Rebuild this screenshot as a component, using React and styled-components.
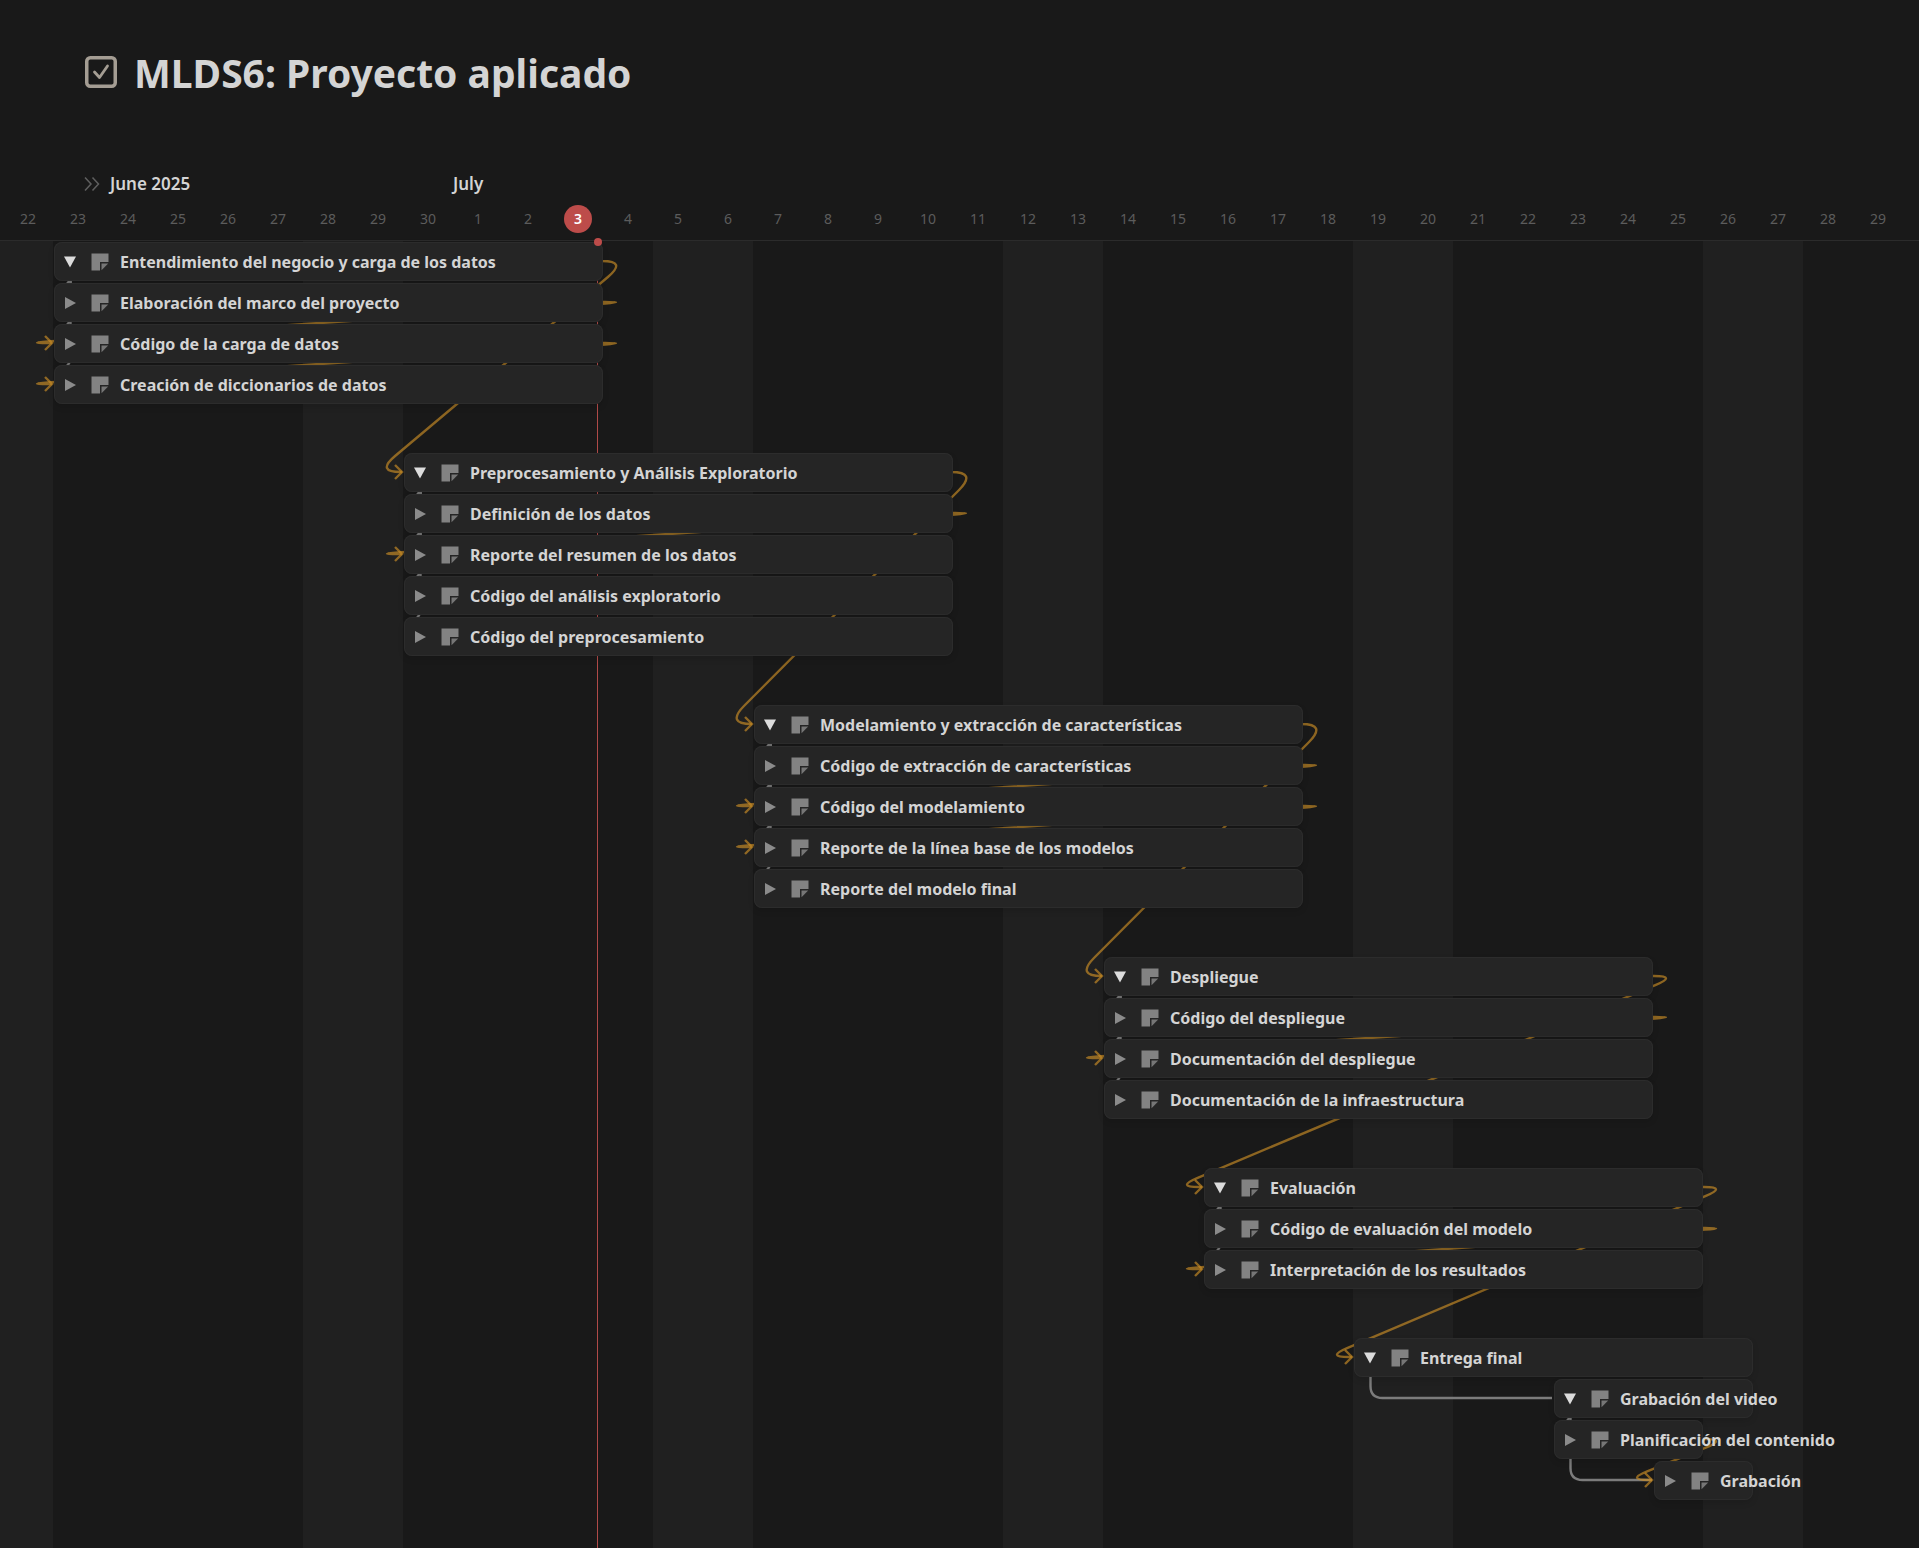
import React from "react";
import styled, { createGlobalStyle, css } from "styled-components";

const DAY = 50;
const EDGE = 3;
const ROW = 39;
const ROW_GAP = 2;
const GROUP_GAP = 49;
const CHART_PAD = 1;
const DAY_COUNT = 38;

const columns = `${EDGE}px repeat(${DAY_COUNT}, ${DAY}px) 1fr`;

const days = Array.from({ length: DAY_COUNT }, (_, i) => {
  const date = new Date(Date.UTC(2025, 5, 22 + i));
  return { key: i, label: date.getUTCDate(), today: i === 11 };
});

/* start and length count in days; 0 is June 22 */
const groups = [
  [
    { name: "Entendimiento del negocio y carga de los datos", start: 1, length: 11, open: true },
    { name: "Elaboración del marco del proyecto", start: 1, length: 11 },
    { name: "Código de la carga de datos", start: 1, length: 11 },
    { name: "Creación de diccionarios de datos", start: 1, length: 11 },
  ],
  [
    { name: "Preprocesamiento y Análisis Exploratorio", start: 8, length: 11, open: true },
    { name: "Definición de los datos", start: 8, length: 11 },
    { name: "Reporte del resumen de los datos", start: 8, length: 11 },
    { name: "Código del análisis exploratorio", start: 8, length: 11 },
    { name: "Código del preprocesamiento", start: 8, length: 11 },
  ],
  [
    { name: "Modelamiento y extracción de características", start: 15, length: 11, open: true },
    { name: "Código de extracción de características", start: 15, length: 11 },
    { name: "Código del modelamiento", start: 15, length: 11 },
    { name: "Reporte de la línea base de los modelos", start: 15, length: 11 },
    { name: "Reporte del modelo final", start: 15, length: 11 },
  ],
  [
    { name: "Despliegue", start: 22, length: 11, open: true },
    { name: "Código del despliegue", start: 22, length: 11 },
    { name: "Documentación del despliegue", start: 22, length: 11 },
    { name: "Documentación de la infraestructura", start: 22, length: 11 },
  ],
  [
    { name: "Evaluación", start: 24, length: 10, open: true },
    { name: "Código de evaluación del modelo", start: 24, length: 10 },
    { name: "Interpretación de los resultados", start: 24, length: 10 },
  ],
  [
    { name: "Entrega final", start: 27, length: 8, open: true },
    { name: "Grabación del video", start: 31, length: 4, open: true },
    { name: "Planificación del contenido", start: 31, length: 3 },
    { name: "Grabación", start: 33, length: 2 },
  ],
];

/* [group, row] pairs */
const dependencies = [
  [[0, 0], [1, 0]],
  [[0, 1], [0, 2]],
  [[0, 2], [0, 3]],
  [[1, 0], [2, 0]],
  [[1, 1], [1, 2]],
  [[2, 0], [3, 0]],
  [[2, 1], [2, 2]],
  [[2, 2], [2, 3]],
  [[3, 0], [4, 0]],
  [[3, 1], [3, 2]],
  [[4, 0], [5, 0]],
  [[4, 1], [4, 2]],
  [[5, 2], [5, 3]],
];

const branches = [
  ...[0, 1, 2, 3, 4].flatMap((g) => groups[g].slice(1).map((_, i) => [[g, 0], [g, i + 1]])),
  [[5, 0], [5, 1]],
  [[5, 1], [5, 2]],
  [[5, 1], [5, 3]],
];

const box = ([g, r]) => {
  const bar = groups[g][r];
  let top = CHART_PAD;
  for (let i = 0; i < g; i += 1) {
    top += groups[i].length * (ROW + ROW_GAP) - ROW_GAP + GROUP_GAP;
  }
  top += r * (ROW + ROW_GAP);
  const left = EDGE + bar.start * DAY + 1;
  return { left, right: left + bar.length * DAY - 1, top, bottom: top + ROW, mid: top + 19 };
};

const dependencyPath = (from, to) => {
  const a = { x: from.right + 24, y: from.mid };
  const b = { x: to.left - 28, y: to.mid };
  const dist = Math.hypot(b.x - a.x, b.y - a.y);
  const ux = (b.x - a.x) / dist;
  const uy = (b.y - a.y) / dist;
  const d = 44 / (1 + Math.abs(ux));
  return [
    `M${from.right} ${from.mid} H${a.x - d}`,
    `Q${a.x} ${a.y} ${a.x + ux * d} ${a.y + uy * d}`,
    `L${b.x - ux * d} ${b.y - uy * d}`,
    `Q${b.x} ${b.y} ${b.x + d} ${b.y}`,
    `H${to.left - 2}`,
  ].join(" ");
};

const branchPath = (from, to) => {
  const x = from.left + 16.5;
  if (to.left > x) {
    return `M${x} ${from.bottom} V${to.mid - 12} Q${x} ${to.mid} ${x + 12} ${to.mid} H${to.left - 2}`;
  }
  return `M${x} ${from.bottom} V${to.top - 6} C${x} ${to.top - 2} ${x - 3} ${to.top} ${x - 6} ${to.top + 4}`;
};

const GlobalStyle = createGlobalStyle`
  *, *::before, *::after { box-sizing: border-box; }
  body {
    margin: 0;
    background: #191919;
    color: #d4d4d4;
    font-family: "Noto Sans", "Open Sans", sans-serif;
  }
`;

const Page = styled.main`
  display: flex;
  flex-direction: column;
  min-height: 100vh;
  overflow: hidden;
`;

const TitleBar = styled.header`
  display: flex;
  align-items: center;
  gap: 16px;
  padding: 43px 84px 0;
`;

const Title = styled.h1`
  margin: 0;
  font-size: 39px;
  line-height: 60px;
  font-weight: 700;
  white-space: nowrap;
`;

const TitleIcon = styled.svg`
  flex: none;
  width: 34px;
  height: 34px;
  margin-bottom: 2px;
`;

const Timeline = styled.section`
  display: flex;
  flex-direction: column;
  flex: 1;
  margin-top: 65px;
`;

const MonthRow = styled.div`
  display: grid;
  grid-template-columns: ${columns};
  align-items: center;
  height: 32px;
`;

const CurrentMonth = styled.div`
  grid-column: 3 / span 7;
  display: flex;
  align-items: center;
  gap: 10px;
  padding-left: 31px;
`;

const MonthLabel = styled.span`
  font-size: 17px;
  line-height: 24px;
  font-weight: 600;
`;

const NextMonth = styled(MonthLabel)`
  grid-column: 11 / span 8;
`;

const ExpandButton = styled.button`
  display: flex;
  padding: 0;
  border: 0;
  background: none;
  color: #5f5f5f;
  cursor: pointer;
`;

const DayRow = styled.div`
  display: grid;
  grid-template-columns: ${columns};
  align-items: center;
  height: 41px;
  padding-bottom: 3px;
  border-bottom: 1px solid #2b2b2b;
`;

const Day = styled.span`
  display: flex;
  align-items: center;
  justify-content: center;
  justify-self: center;
  width: 28px;
  height: 28px;
  border-radius: 50%;
  color: #5c5c5c;
  font-size: 14px;
  line-height: 20px;

  &:first-child {
    grid-column-start: 2;
  }

  ${({ $today }) =>
    $today &&
    css`
      background: #bd4c4a;
      color: #ffffff;
      font-weight: 600;
    `}
`;

const Chart = styled.div`
  position: relative;
  flex: 1;
  display: flex;
  flex-direction: column;
  gap: ${GROUP_GAP}px;
  padding: ${CHART_PAD}px 0 44px;
  background-image: linear-gradient(90deg, #202020 0 ${2 * DAY}px, transparent ${2 * DAY}px);
  background-size: ${7 * DAY}px 100%;
  background-position: ${EDGE - DAY}px 0;
`;

const TodayLine = styled.div`
  position: absolute;
  top: 0;
  bottom: 0;
  left: ${EDGE + 12 * DAY - 6}px;
  width: 1px;
  background: #b04a48;
`;

const TodayDot = styled.div`
  position: absolute;
  z-index: 2;
  top: -3px;
  left: ${EDGE + 12 * DAY - 9}px;
  width: 8px;
  height: 8px;
  border-radius: 50%;
  background: #bd4c4a;
`;

const Connectors = styled.svg`
  position: absolute;
  top: 0;
  left: 0;
  width: 100%;
  height: 100%;
  fill: none;
  stroke-width: 2.4;
`;

const Branch = styled.path`
  stroke: #7c7c7c;
`;

const Dependency = styled.path`
  stroke: rgba(202, 141, 38, 0.66);
`;

const Group = styled.div`
  display: grid;
  grid-template-columns: ${columns};
  row-gap: ${ROW_GAP}px;
`;

const Bar = styled.article`
  position: relative;
  z-index: 1;
  grid-column: ${({ $start, $length }) => `${$start + 2} / span ${$length}`};
  display: flex;
  align-items: center;
  height: ${ROW}px;
  margin-left: 1px;
  padding-left: 10px;
  border-radius: 8px;
  background: #252525;
  box-shadow: inset 0 0 0 1px #2c2c2c, 0 3px 6px rgba(0, 0, 0, 0.12);
`;

const Toggle = styled.button`
  display: flex;
  flex: none;
  width: 12px;
  padding: 0;
  border: 0;
  background: none;
  color: ${({ $open }) => ($open ? "#dcdcdc" : "#8b8b8b")};
  cursor: pointer;
`;

const NoteIcon = styled.svg`
  flex: none;
  width: 18px;
  height: 18px;
  margin: 0 11px 0 15px;
`;

const BarTitle = styled.span`
  font-size: 16px;
  line-height: 24px;
  font-weight: 700;
  white-space: nowrap;
`;

function TaskBar({ name, start, length, open }) {
  return (
    <Bar $start={start} $length={length}>
      <Toggle type="button" $open={open} aria-expanded={Boolean(open)} aria-label={name}>
        <svg width="12" height="12" viewBox="0 0 12 12" fill="currentColor" aria-hidden="true">
          <path d={open ? "M0 .5H12L6 11.5Z" : "M1 0V12L12 6Z"} />
        </svg>
      </Toggle>
      <NoteIcon viewBox="0 0 18 18" aria-hidden="true">
        <path d="M.5 .5H17.5V9H9V17.5H.5Z" fill="#828282" />
        <path d="M10.5 10.5H17.2L10.5 17.2Z" fill="#767676" />
      </NoteIcon>
      <BarTitle>{name}</BarTitle>
    </Bar>
  );
}

export default function App() {
  return (
    <>
      <GlobalStyle />
      <Page>
        <TitleBar>
          <TitleIcon viewBox="0 0 34 34" fill="none" stroke="#a49d93" aria-hidden="true">
            <rect x="2.75" y="2.75" width="28.5" height="28.5" rx="3.5" strokeWidth="3.5" />
            <path d="M10.5 17L15.5 22.5L23.5 11" strokeWidth="2.8" strokeLinecap="round" strokeLinejoin="round" />
          </TitleIcon>
          <Title>MLDS6: Proyecto aplicado</Title>
        </TitleBar>

        <Timeline>
          <MonthRow>
            <CurrentMonth>
              <ExpandButton type="button" aria-label="Show table">
                <svg width="16" height="16" viewBox="0 0 16 16" fill="none" stroke="currentColor" strokeWidth="1.5" aria-hidden="true">
                  <path d="M1 1.5L7 8L1 14.5M8.5 1.5L14.5 8L8.5 14.5" />
                </svg>
              </ExpandButton>
              <MonthLabel>June 2025</MonthLabel>
            </CurrentMonth>
            <NextMonth>July</NextMonth>
          </MonthRow>
          <DayRow>
            {days.map((day) => (
              <Day key={day.key} $today={day.today}>
                {day.label}
              </Day>
            ))}
          </DayRow>

          <Chart>
            <TodayLine />
            <Connectors aria-hidden="true">
              {branches.map(([from, to]) => (
                <Branch key={`${from}-${to}`} d={branchPath(box(from), box(to))} />
              ))}
              {dependencies.map(([from, to]) => {
                const target = box(to);
                return (
                  <g key={`${from}-${to}`}>
                    <Dependency d={dependencyPath(box(from), target)} />
                    <Dependency
                      d={`M${target.left - 9} ${target.mid - 7} L${target.left - 2} ${target.mid} L${target.left - 9} ${target.mid + 7}`}
                    />
                  </g>
                );
              })}
            </Connectors>
            {groups.map((bars) => (
              <Group key={bars[0].name}>
                {bars.map((bar) => (
                  <TaskBar key={bar.name} {...bar} />
                ))}
              </Group>
            ))}
            <TodayDot />
          </Chart>
        </Timeline>
      </Page>
    </>
  );
}
